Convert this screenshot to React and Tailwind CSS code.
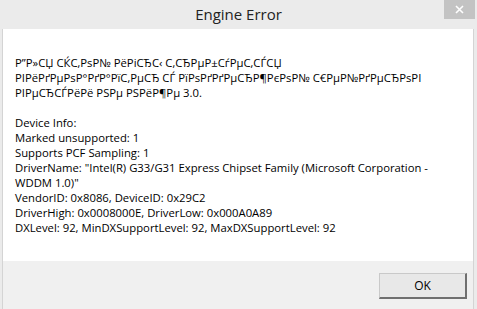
export default function App() {
  const intro = [
    'Р”Р»СЏ СЌС‚РѕР№ РёРіСЂС‹ С‚СЂРµР±СѓРµС‚СЃСЏ',
    'РІРёРґРµРѕР°РґР°РїС‚РµСЂ СЃ РїРѕРґРґРµСЂР¶РєРѕР№ С€РµР№РґРµСЂРѕРІ',
    'РІРµСЂСЃРёРё РЅРµ РЅРёР¶Рµ 3.0.',
  ]
  const info = [
    'Device Info:',
    'Marked unsupported: 1',
    'Supports PCF Sampling: 1',
    'DriverName: "Intel(R) G33/G31 Express Chipset Family (Microsoft Corporation -',
    'WDDM 1.0)"',
    'VendorID: 0x8086, DeviceID: 0x29C2',
    'DriverHigh: 0x0008000E, DriverLow: 0x000A0A89',
    'DXLevel: 92, MinDXSupportLevel: 92, MaxDXSupportLevel: 92',
  ]

  return (
    <div className="w-[477px] h-[309px] flex flex-col bg-[#ebebeb] overflow-hidden font-['Open_Sans','Noto_Sans',sans-serif] text-black">
      <div className="relative h-[29px] shrink-0 flex items-center justify-center">
        <span className="text-[15px] text-[#222] leading-none">Engine Error</span>
        <div className="absolute top-0 right-[2px] w-[31px] h-[19px] bg-[#c3c3c3] flex items-center justify-center">
          <svg width="9" height="9" viewBox="0 0 9 9">
            <path d="M1 1 L8 8 M8 1 L1 8" stroke="#fff" strokeWidth="1.6" />
          </svg>
        </div>
      </div>

      <div className="flex-1 flex flex-col ml-[2px] mr-[3px] border-l border-r border-[#d4d4d4]">
        <div className="h-[232px] shrink-0 bg-white pl-[12px] pt-[26px] text-[11.3px] leading-[15px] whitespace-nowrap">
          {intro.map((line) => (
            <div key={line}>{line}</div>
          ))}
          <div className="h-[15px]" />
          {info.map((line) => (
            <div key={line}>{line}</div>
          ))}
        </div>
        <div className="flex-1 bg-[#f0f0f0] flex justify-end items-start pt-[12px] pr-[6px]">
          <button className="w-[88px] h-[26px] bg-[#e8e8e8] border border-t-[#c9c9c9] border-l-[#c9c9c9] border-r-2 border-b-2 border-r-[#6f6f6f] border-b-[#6f6f6f] text-[12px] text-black leading-none">
            OK
          </button>
        </div>
      </div>
    </div>
  )
}
